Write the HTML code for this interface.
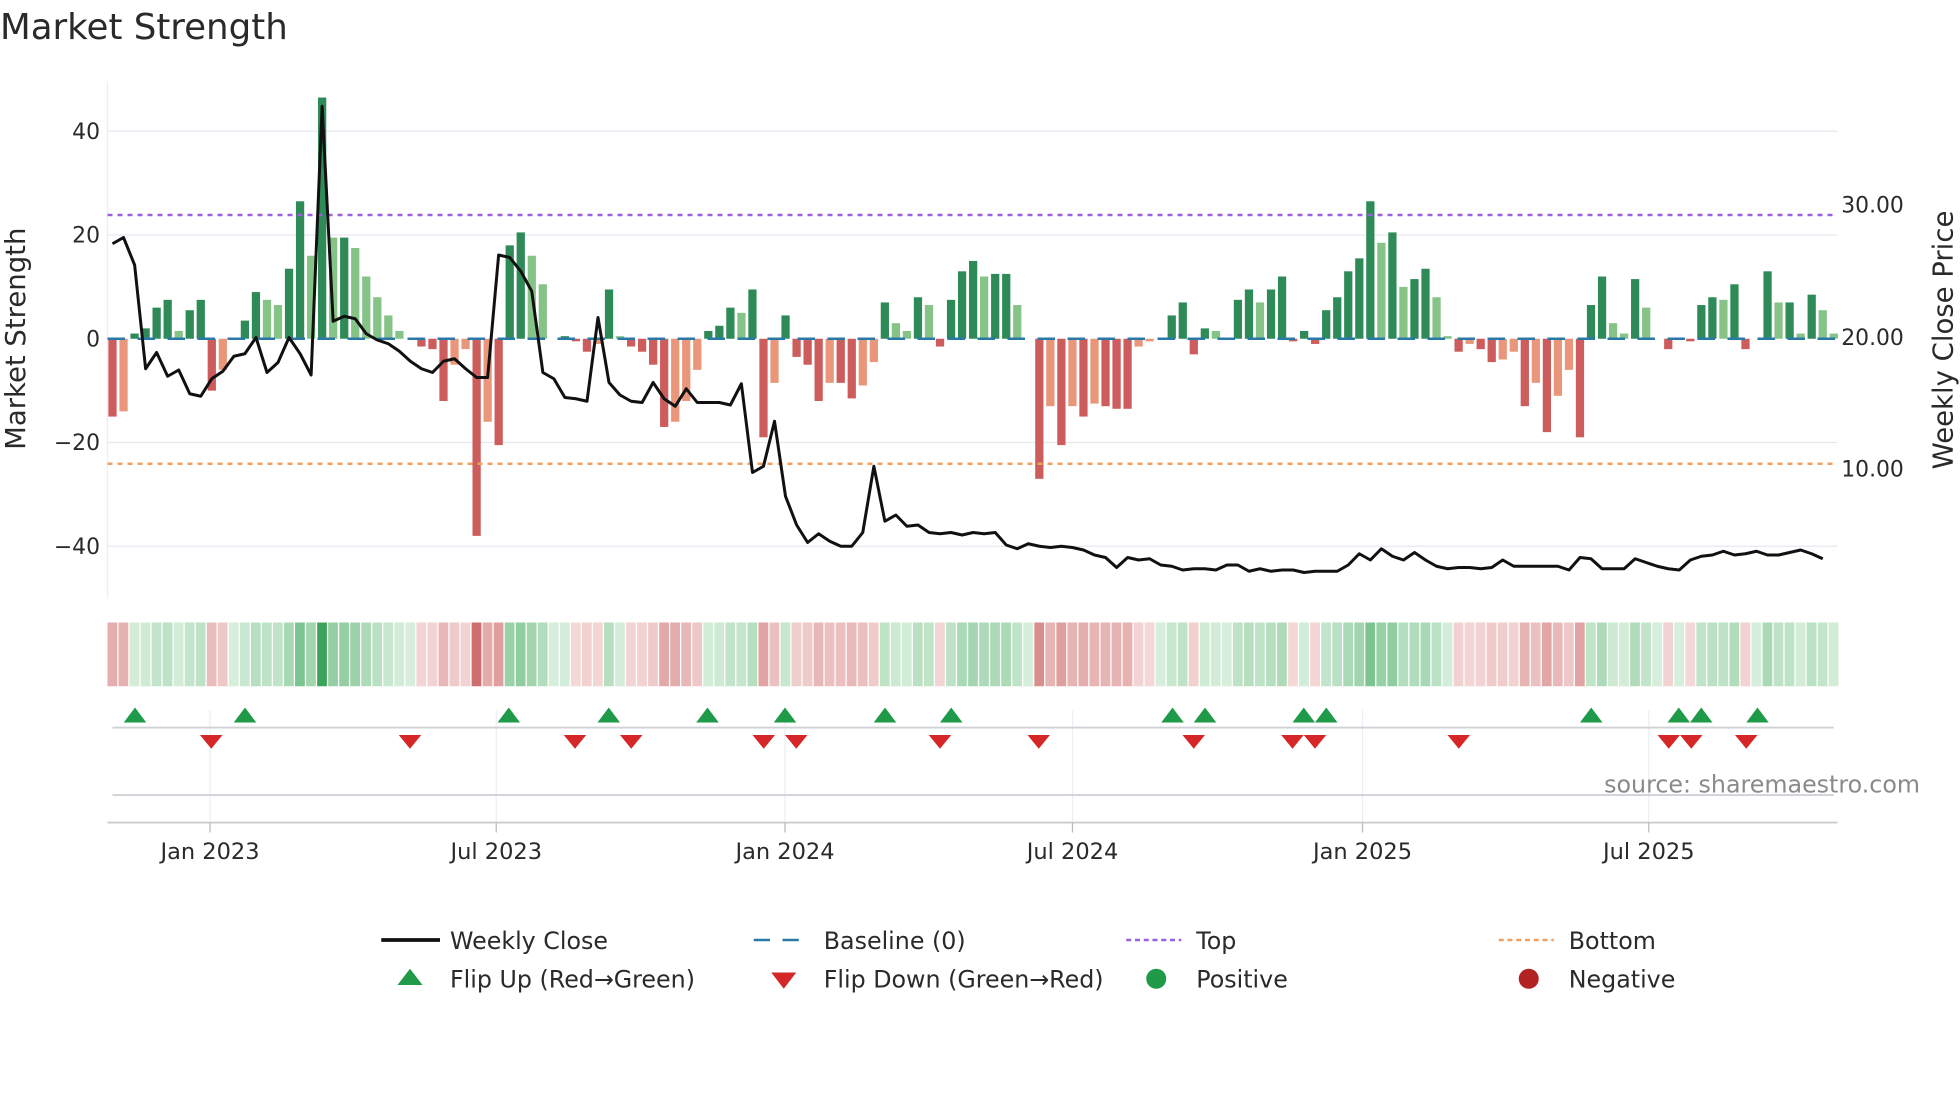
<!DOCTYPE html>
<html><head><meta charset="utf-8"><style>
html,body{margin:0;padding:0;background:#fff;}
svg{display:block;}
text{font-family:"DejaVu Sans","Liberation Sans",sans-serif;fill:#2a2a2a;}
</style></head><body>
<svg id="s" width="1960" height="1102" viewBox="0 0 1568 881.6" xmlns="http://www.w3.org/2000/svg">
<text x="0" y="31" font-size="28.5" fill="#333">Market Strength</text>
<g stroke="#e6e8f0" stroke-width="1">
<line x1="86" x2="1470" y1="105" y2="105"/><line x1="86" x2="1470" y1="188" y2="188"/>
<line x1="86" x2="1470" y1="354" y2="354"/><line x1="86" x2="1470" y1="437" y2="437"/>
</g>
<line x1="86" x2="86" y1="65" y2="478" stroke="#eee"/>
<g font-size="17.5" text-anchor="end">
<text x="80" y="111">40</text><text x="80" y="194">20</text><text x="80" y="277">0</text>
<text x="80" y="360">−20</text><text x="80" y="443">−40</text>
</g>
<g font-size="17.5">
<text x="1473" y="170">30.00</text><text x="1473" y="276">20.00</text><text x="1473" y="381">10.00</text>
</g>
<text transform="translate(20,271) rotate(-90)" font-size="22" text-anchor="middle">Market Strength</text>
<text transform="translate(1562,272) rotate(-90)" font-size="22" text-anchor="middle">Weekly Close Price</text>
<g id="bars"></g>
<line x1="86" x2="1470" y1="271" y2="271" stroke="#2a78a8" stroke-width="2" stroke-dasharray="14,10"/>
<line x1="86" x2="1470" y1="172" y2="172" stroke="#9b5fe0" stroke-width="2" stroke-dasharray="4,4"/>
<line x1="86" x2="1470" y1="371" y2="371" stroke="#f0a060" stroke-width="2" stroke-dasharray="4,4"/>
<polyline id="price" fill="none" stroke="#111" stroke-width="2.4" stroke-linejoin="round"/>
<g id="heat"></g>
<g stroke="#eceef3" stroke-width="1">
<line x1="168" x2="168" y1="568" y2="658"/><line x1="397" x2="397" y1="568" y2="658"/>
<line x1="628" x2="628" y1="568" y2="658"/><line x1="858" x2="858" y1="568" y2="658"/>
<line x1="1090" x2="1090" y1="568" y2="658"/><line x1="1319" x2="1319" y1="568" y2="658"/>
</g>
<line x1="90" x2="1467" y1="582" y2="582" stroke="#d0d2d8" stroke-width="1.5"/>
<line x1="90" x2="1467" y1="636" y2="636" stroke="#d0d2d8" stroke-width="1.5"/>
<line x1="86" x2="1470" y1="658" y2="658" stroke="#ccc" stroke-width="1.5"/>
<g stroke="#bbb"><line x1="168" x2="168" y1="658" y2="666"/><line x1="397" x2="397" y1="658" y2="666"/><line x1="628" x2="628" y1="658" y2="666"/><line x1="858" x2="858" y1="658" y2="666"/><line x1="1090" x2="1090" y1="658" y2="666"/><line x1="1319" x2="1319" y1="658" y2="666"/></g>
<g id="flips"></g>
<text x="1536" y="634" font-size="19" text-anchor="end" style="fill:#8a8a8a">source: sharemaestro.com</text>
<g font-size="18" text-anchor="middle">
<text x="168" y="687">Jan 2023</text><text x="397" y="687">Jul 2023</text><text x="628" y="687">Jan 2024</text>
<text x="858" y="687">Jul 2024</text><text x="1090" y="687">Jan 2025</text><text x="1319" y="687">Jul 2025</text>
</g>
<g font-size="19">
<line x1="305" x2="352" y1="752" y2="752" stroke="#111" stroke-width="3"/>
<text x="360" y="759">Weekly Close</text>
<line x1="603" x2="647" y1="752" y2="752" stroke="#2a78a8" stroke-width="2" stroke-dasharray="13,10"/>
<text x="659" y="759">Baseline (0)</text>
<line x1="901" x2="945" y1="752" y2="752" stroke="#9b5fe0" stroke-width="2" stroke-dasharray="4,3"/>
<text x="957" y="759">Top</text>
<line x1="1199" x2="1243" y1="752" y2="752" stroke="#f0a060" stroke-width="2" stroke-dasharray="4,3"/>
<text x="1255" y="759">Bottom</text>
<polygon points="318,788 338,788 328,775" fill="#1e9a48"/>
<text x="360" y="790">Flip Up (Red→Green)</text>
<polygon points="617,778 637,778 627,791" fill="#d62728"/>
<text x="659" y="790">Flip Down (Green→Red)</text>
<circle cx="925" cy="783" r="8" fill="#1e9a48"/>
<text x="957" y="790">Positive</text>
<circle cx="1223" cy="783" r="8" fill="#b22222"/>
<text x="1255" y="790">Negative</text>
</g>
</svg>
<script>
var V=[-15,-14,1,2,6,7.5,1.5,5.5,7.5,-10,-6,0,3.5,9,7.5,6.5,13.5,26.5,16,46.5,19.5,19.5,17.5,12,8,4.5,1.5,0,-1.5,-2,-12,-5,-2,-38,-16,-20.5,18,20.5,16,10.5,0,0.5,-0.5,-2.5,-1,9.5,0.5,-1.5,-2.5,-5,-17,-16,-12,-6,1.5,2.5,6,5,9.5,-19,-8.5,4.5,-3.5,-5,-12,-8.5,-8.5,-11.5,-9,-4.5,7,3,1.5,8,6.5,-1.5,7.5,13,15,12,12.5,12.5,6.5,0,-27,-13,-20.5,-13,-15,-12.5,-13,-13.5,-13.5,-1.5,-0.5,0,4.5,7,-3,2,1.5,0,7.5,9.5,7,9.5,12,-0.5,1.5,-1,5.5,8,13,15.5,26.5,18.5,20.5,10,11.5,13.5,8,0.5,-2.5,-1,-2,-4.5,-4,-2.5,-13,-8.5,-18,-11,-6,-19,6.5,12,3,1,11.5,6,0,-2,0,-0.5,6.5,8,7.5,10.5,-2,0,13,7,7,1,8.5,5.5,1];
var P=[195,190,212,295,282,301,296,315,317,303,297,285,283,270,298,290,270,283,300,85,257,253,255,267,272,275,281,289,295,298,289,287,295,302,302,204,206,217,233,298,303,318,319,321,254,306,316,321,322,306,319,325,311,322,322,322,324,307,378,373,337,397,420,434,427,433,437,437,426,373,417,412,421,420,426,427,426,428,426,427,426,436,439,435,437,438,437,438,440,444,446,454,446,448,447,452,453,456,455,455,456,452,452,457,455,457,456,456,458,457,457,457,452,443,448,439,445,448,442,448,453,455,454,454,455,454,448,453,453,453,453,453,456,446,447,455,455,455,447,450,453,455,456,448,445,444,441,444,443,441,444,444,442,440,443,447];
var NS="http://www.w3.org/2000/svg",step=(1467-90)/(V.length-1);
function el(t,a,p){var e=document.createElementNS(NS,t);for(var k in a)e.setAttribute(k,a[k]);p.appendChild(e);return e;}
var bars=document.getElementById('bars'),heat=document.getElementById('heat');
function mix(a,b,t){return 'rgb('+a.map(function(v,i){return Math.round(v+(b[i]-v)*t)}).join(',')+')';}
for(var i=0;i<V.length;i++){
 var v=V[i],x=90+i*step,prev=i?V[i-1]:0,h=Math.abs(v)*4.15;
 var c;
 if(v>=0) c=(v>=prev)?'#2e8b57':'#86c387'; else c=(v<=prev)?'#cd5c5c':'#e9967a';
 if(Math.abs(v)>0.1) el('rect',{x:x-3.3,y:v>=0?271-h:271,width:6.6,height:h,fill:c},bars);
 var hc=v>=0?mix([214,238,219],[58,165,88],Math.min(1,v/46)):mix([244,216,216],[206,110,110],Math.min(1,Math.abs(v)/38));
 el('rect',{x:x-4,y:498,width:7.8,height:51,fill:hc},heat);
}
var pts=[];for(var i=0;i<P.length;i++)pts.push((90+i*step).toFixed(1)+','+P[i]);
document.getElementById('price').setAttribute('points',pts.join(' '));
var f=document.getElementById('flips');
[108,196,407,487,566,628,708,761,938,964,1043,1061,1273,1343,1361,1406].forEach(function(x){el('polygon',{points:(x-9)+',578 '+(x+9)+',578 '+x+',566',fill:'#1e9a48'},f);});
[169,328,460,505,611,637,752,831,955,1034,1052,1167,1335,1353,1397].forEach(function(x){el('polygon',{points:(x-9)+',588 '+(x+9)+',588 '+x+',599',fill:'#d62728'},f);});
</script>
</body></html>
